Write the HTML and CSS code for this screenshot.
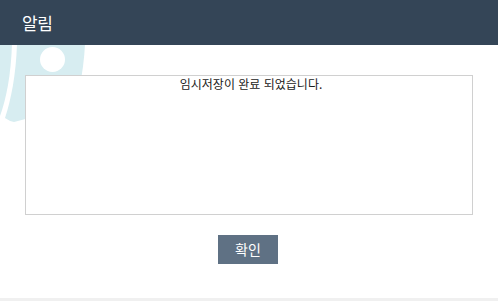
FILE: index.html
```html
<!DOCTYPE html>
<html lang="ko">
<head>
<meta charset="utf-8">
<title>알림</title>
<link rel="stylesheet" href="styles.css">
</head>
<body>
<div class="dialog">
  <svg class="decor" width="100" height="130" viewBox="0 0 100 130" aria-hidden="true">
    <path d="M0,44 H12 C11,75 6,100 0,116 Z" fill="#d7edf1"/>
    <path d="M17,44 H85 Q84,66 79,90 L60,110 L14,122 Q9,121 5,118 C11,100 16,75 17,44 Z" fill="#d7edf1"/>
    <circle cx="52.5" cy="59.5" r="12.5" fill="#ffffff"/>
  </svg>
  <header class="dialog-header">
    <h1 class="dialog-title">알림</h1>
  </header>
  <main class="dialog-body">
    <div class="message-box">임시저장이 완료 되었습니다.</div>
    <div class="actions">
      <button class="btn-confirm" type="button">확인</button>
    </div>
  </main>
</div>
</body>
</html>
```

FILE: styles.css
```css
html, body {
  margin: 0;
  padding: 0;
}
body {
  background: #f0f0f0;
  font-family: "Noto Sans CJK KR", "Noto Sans", sans-serif;
  width: 498px;
  height: 301px;
  overflow: hidden;
}
.dialog {
  position: relative;
  height: 298px;
  background: #ffffff;
}
.decor {
  position: absolute;
  left: 0;
  top: 0;
}
.dialog-header {
  position: relative;
  height: 45px;
  background: #344557;
  display: flex;
  align-items: center;
  padding-left: 22px;
}
.dialog-title {
  margin: 0;
  font-size: 17px;
  font-weight: 400;
  color: #ffffff;
  line-height: 1;
  letter-spacing: -0.5px;
}
.dialog-body {
  position: relative;
  padding: 30px 25px 0;
}
.message-box {
  box-sizing: border-box;
  height: 140px;
  border: 1px solid #d0d0d0;
  background: #ffffff;
  text-align: center;
  font-size: 12px;
  line-height: 14px;
  color: #1a1a1a;
  padding-top: 1px;
  padding-left: 4px;
}
.actions {
  display: flex;
  justify-content: center;
  margin-top: 20px;
  padding-right: 2px;
}
.btn-confirm {
  width: 60px;
  height: 29px;
  border: 0;
  background: #5f7184;
  color: #ffffff;
  font-family: "Noto Sans CJK KR", "Noto Sans", sans-serif;
  font-size: 14px;
  line-height: 29px;
  padding: 0;
  cursor: pointer;
}
```
